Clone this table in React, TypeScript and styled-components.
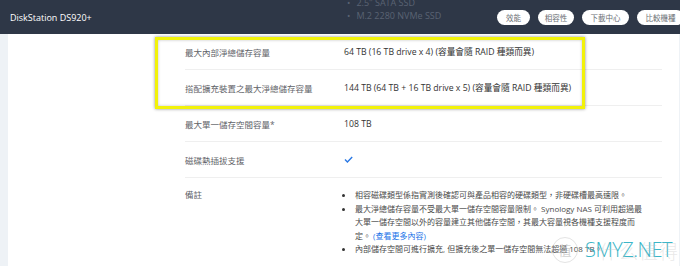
import React from 'react';
import styled, { createGlobalStyle } from 'styled-components';

const GlobalStyle = createGlobalStyle`
  html, body {
    margin: 0;
    padding: 0;
    background: #ffffff;
  }
  body {
    font-family: "Open Sans", "Noto Sans CJK TC", sans-serif;
    overflow: hidden;
  }
`;

const Page = styled.div`
  position: relative;
  width: 680px;
  height: 266px;
  display: flex;
  flex-direction: column;
  overflow: hidden;
`;

const Header = styled.header`
  height: 34px;
  flex-shrink: 0;
  background: #2e3747;
  display: flex;
  align-items: center;
  padding-left: 10px;
  position: relative;
  overflow: hidden;
`;

const Title = styled.div`
  width: 335px;
  color: #ffffff;
  font-size: 9px;
`;

const GhostList = styled.ul`
  position: absolute;
  left: 347px;
  top: -4px;
  margin: 0;
  padding: 0;
  list-style: none;
  color: #5a6373;
  font-size: 9px;
  line-height: 13px;
`;

const GhostItem = styled.li`
  &::before {
    content: '•';
    margin-right: 6px;
  }
`;

const Nav = styled.nav`
  margin-left: auto;
  margin-right: -4px;
  display: flex;
  gap: 8px;
  flex-shrink: 0;
`;

const Pill = styled.button`
  width: ${p => p.$w}px;
  height: 15px;
  padding: 0;
  border: none;
  border-radius: 8px;
  background: #ffffff;
  color: #6b6f75;
  font-family: "Noto Sans CJK TC", sans-serif;
  font-size: 7.5px;
  line-height: 15px;
  white-space: nowrap;
  text-align: center;
`;

const Body = styled.div`
  flex: 1;
  display: flex;
  min-height: 0;
`;

const Rail = styled.div`
  width: ${p => p.$w}px;
  flex-shrink: 0;
  background: #eef2f6;
`;

const Main = styled.main`
  flex: 1;
  background: #ffffff;
  padding-left: 177px;
`;

const Table = styled.div`
  width: 477px;
`;

const Row = styled.div`
  display: flex;
  align-items: ${p => (p.$top ? 'flex-start' : 'center')};
  min-height: 35px;
  border-bottom: ${p => (p.$last ? 'none' : '1px solid #efefef')};
  padding-top: ${p => (p.$top ? '10px' : '0')};
`;

const Label = styled.div`
  width: 159px;
  flex-shrink: 0;
  color: #5f6368;
  font-size: 8.5px;
`;

const Value = styled.div`
  flex: 1;
  color: #333333;
  font-size: 8.7px;
`;

const Notes = styled.ul`
  margin: 0;
  padding: 0 0 0 11px;
  width: 294px;
  color: #4a4a4a;
  font-size: 8px;
  line-height: 13.6px;
`;

const Note = styled.li`
  &::marker {
    font-size: 9px;
    color: #333;
  }
`;

const MoreLink = styled.a`
  color: #1a73e8;
  text-decoration: none;
`;

const Highlight = styled.div`
  position: absolute;
  left: 155px;
  top: 37px;
  width: 424px;
  height: 66px;
  border: 3px solid #f2f20a;
  box-shadow: 0 0 3px rgba(0, 0, 0, 0.45), inset 0 0 3px rgba(0, 0, 0, 0.25);
  pointer-events: none;
`;

const Watermark = styled.div`
  position: absolute;
  left: 552px;
  top: 236px;
  display: flex;
  align-items: center;
  gap: 7px;
  pointer-events: none;
`;

const Badge = styled.div`
  width: 24px;
  height: 24px;
  border-radius: 50%;
  border: 1.5px solid rgba(200, 200, 200, 0.5);
  color: rgba(180, 180, 180, 0.6);
  font-family: "Noto Sans CJK SC", sans-serif;
  font-size: 13px;
  display: flex;
  align-items: center;
  justify-content: center;
`;

const Brand = styled.div`
  position: relative;
  color: #3cb6c8;
  font-family: "Open Sans", sans-serif;
  font-weight: 300;
  font-size: 20px;
  letter-spacing: -0.5px;
  &::after {
    content: '什么值得买';
    position: absolute;
    left: 14px;
    top: 1px;
    font-family: "Noto Sans CJK SC", sans-serif;
    font-size: 19px;
    letter-spacing: 1px;
    color: rgba(190, 190, 190, 0.35);
    white-space: nowrap;
  }
`;

const Check = () => (
  <svg width="9" height="7" viewBox="0 0 9 7">
    <path d="M1 3.6 L3.4 6 L8.2 1" fill="none" stroke="#2a78e4" strokeWidth="1.4" />
  </svg>
);

const specs = [
  { label: '最大內部淨總儲存容量', value: '64 TB (16 TB drive x 4) (容量會隨 RAID 種類而異)' },
  { label: '搭配擴充裝置之最大淨總儲存容量', value: '144 TB (64 TB + 16 TB drive x 5) (容量會隨 RAID 種類而異)' },
  { label: '最大單一儲存空間容量*', value: '108 TB' },
];

const navItems = [
  { text: '效能', w: 33 },
  { text: '相容性', w: 36 },
  { text: '下載中心', w: 47 },
  { text: '比較機種', w: 47 },
];

export default function App() {
  return (
    <>
      <GlobalStyle />
      <Page>
        <Header>
          <Title>DiskStation DS920+</Title>
          <GhostList>
            <GhostItem>2.5" SATA SSD</GhostItem>
            <GhostItem>M.2 2280 NVMe SSD</GhostItem>
          </GhostList>
          <Nav>
            {navItems.map(n => (
              <Pill key={n.text} $w={n.w}>{n.text}</Pill>
            ))}
          </Nav>
        </Header>
        <Body>
          <Rail $w={8} />
          <Main>
            <Table>
              {specs.map(s => (
                <Row key={s.label}>
                  <Label>{s.label}</Label>
                  <Value>{s.value}</Value>
                </Row>
              ))}
              <Row>
                <Label>磁碟熱插拔支援</Label>
                <Value><Check /></Value>
              </Row>
              <Row $top $last>
                <Label>備註</Label>
                <Notes>
                  <Note>相容磁碟類型係指實測後確認可與產品相容的硬碟類型，非硬碟槽最高速限。</Note>
                  <Note>
                    最大淨總儲存容量不受最大單一儲存空間容量限制。 Synology NAS 可利用超過最大單一儲存空間以外的容量建立其他儲存空間，其最大容量視各機種支援程度而定。 <MoreLink href="#">(查看更多內容)</MoreLink>
                  </Note>
                  <Note>內部儲存空間可進行擴充, 但擴充後之單一儲存空間無法超過 108 TB。</Note>
                </Notes>
              </Row>
            </Table>
          </Main>
          <Rail $w={1} />
        </Body>
        <Highlight />
        <Watermark>
          <Badge>值</Badge>
          <Brand>SMYZ.NET</Brand>
        </Watermark>
      </Page>
    </>
  );
}
